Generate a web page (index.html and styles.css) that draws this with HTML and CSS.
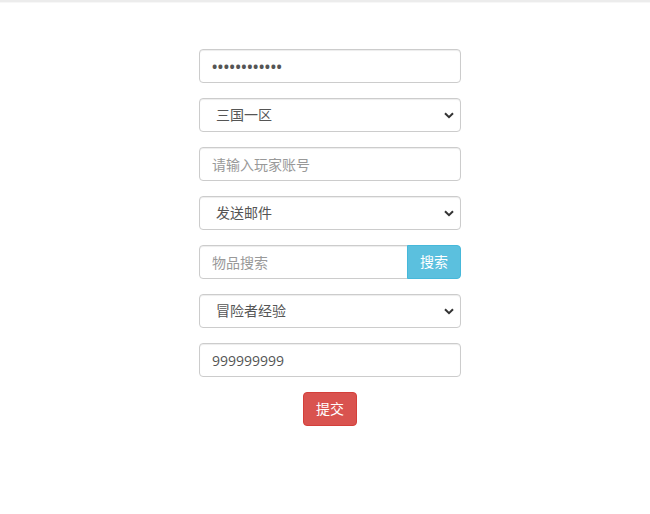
FILE: index.html
```html
<!DOCTYPE html>
<html lang="zh-CN">
<head>
  <meta charset="UTF-8" />
  <title>GM工具</title>
  <link rel="stylesheet" href="styles.css">
</head>
<body>
  <div class="top-line"></div>

  <form class="gm-form" onsubmit="return false;">
    <div class="form-group">
      <input type="password" class="form-control password" value="123456789012">
    </div>

    <div class="form-group select-wrap">
      <select class="form-control">
        <option>三国一区</option>
        <option>三国二区</option>
      </select>
      <svg class="chevron" width="10" height="7" viewBox="0 0 10 7"><path d="M1 1.2 L5 5.2 L9 1.2" fill="none" stroke="#333" stroke-width="2"/></svg>
    </div>

    <div class="form-group">
      <input type="text" class="form-control" placeholder="请输入玩家账号">
    </div>

    <div class="form-group select-wrap">
      <select class="form-control">
        <option>发送邮件</option>
        <option>踢人下线</option>
      </select>
      <svg class="chevron" width="10" height="7" viewBox="0 0 10 7"><path d="M1 1.2 L5 5.2 L9 1.2" fill="none" stroke="#333" stroke-width="2"/></svg>
    </div>

    <div class="form-group input-group">
      <input type="text" class="form-control" placeholder="物品搜索">
      <button type="button" class="btn btn-info">搜索</button>
    </div>

    <div class="form-group select-wrap">
      <select class="form-control">
        <option>冒险者经验</option>
        <option>金币</option>
      </select>
      <svg class="chevron" width="10" height="7" viewBox="0 0 10 7"><path d="M1 1.2 L5 5.2 L9 1.2" fill="none" stroke="#333" stroke-width="2"/></svg>
    </div>

    <div class="form-group">
      <input type="text" class="form-control" value="999999999">
    </div>

    <div class="actions">
      <button type="submit" class="btn btn-danger">提交</button>
    </div>
  </form>
</body>
</html>
```

FILE: styles.css
```css
body {
  margin: 0;
  font-family: "Open Sans", "Noto Sans CJK SC", sans-serif;
  font-size: 14px;
  color: #333;
  background: #fff;
}

.top-line {
  height: 2px;
  background: #ececec;
  border-bottom: 1px solid #f7f7f7;
}

.gm-form {
  width: 262px;
  margin-left: 199px;
  padding-top: 46px;
}

.form-group {
  margin-bottom: 15px;
}

.form-control {
  display: block;
  box-sizing: border-box;
  width: 100%;
  height: 34px;
  padding: 6px 12px;
  font-family: inherit;
  font-size: 14px;
  line-height: 20px;
  color: #555;
  background: #fff;
  border: 1px solid #ccc;
  border-radius: 4px;
  box-shadow: inset 0 1px 1px rgba(0, 0, 0, 0.075);
  outline: none;
}

.form-control::placeholder {
  color: #999;
}

.password {
  font-weight: bold;
  letter-spacing: 0.6px;
}

.select-wrap {
  position: relative;
}

.select-wrap select {
  appearance: none;
  -webkit-appearance: none;
  padding-left: 16px;
}

.chevron {
  position: absolute;
  right: 7px;
  top: 14px;
  pointer-events: none;
}

.input-group {
  display: flex;
}

.input-group .form-control {
  flex: 1;
  border-radius: 4px 0 0 4px;
}

.input-group .btn {
  border-radius: 0 4px 4px 0;
  margin-left: -1px;
}

.btn {
  box-sizing: border-box;
  height: 34px;
  padding: 6px 12px;
  font-family: inherit;
  font-size: 14px;
  line-height: 20px;
  color: #fff;
  border: 1px solid transparent;
  border-radius: 4px;
  cursor: pointer;
}

.btn-info {
  background-color: #5bc0de;
  border-color: #46b8da;
}

.btn-danger {
  background-color: #d9534f;
  border-color: #d43f3a;
}

.actions {
  text-align: center;
}
```
